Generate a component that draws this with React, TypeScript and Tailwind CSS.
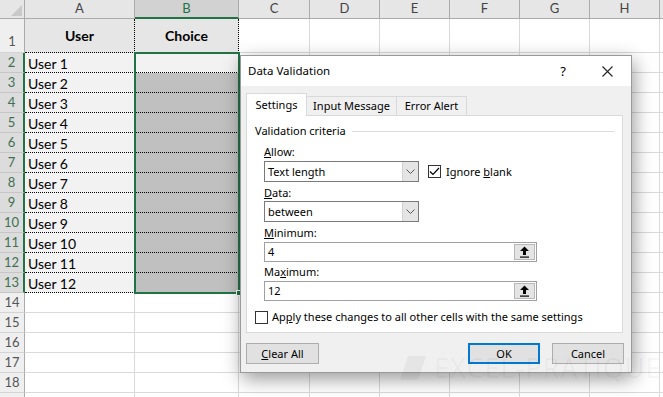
import React from 'react';

const letters = ['A', 'B', 'C', 'D', 'E', 'F', 'G', 'H', 'I'];
const rows = Array.from({ length: 19 }, (_, i) => i + 1);

function colHeaderClass(l: string) {
  if (l === 'B') {
    return 'h-[19px] flex items-center justify-center bg-[#d2d2d2] text-[#217346] border-r border-[#ababab] border-b-2 border-b-[#217346] text-[13px]';
  }
  return 'h-[19px] flex items-center justify-center bg-[#e6e6e6] text-[#444] border-r border-b border-[#ababab] text-[13px]';
}

function rowHeaderClass(r: number) {
  const h = r === 1 ? 'h-[34px] items-end pb-[1px]' : 'h-[20px] items-center';
  if (r >= 2 && r <= 13) {
    return `${h} flex justify-center bg-[#dcdcdc] text-[#3f6f52] border-b border-[#c6c6c6] border-r-2 border-r-[#217346] text-[13px]`;
  }
  return `${h} flex justify-center bg-[#efefef] text-[#555] border-b border-[#d4d4d4] border-r border-r-[#ababab] text-[13px]`;
}

function Cell({ r, c }: { r: number; c: string }) {
  const h = r === 1 ? 'h-[34px]' : 'h-[20px]';
  if (c === 'A' && r === 1) {
    return <div className={`${h} flex items-center justify-center bg-[#e7e6e6] font-bold border-b border-r border-dotted border-black`}>User</div>;
  }
  if (c === 'B' && r === 1) {
    return <div className={`${h} flex items-center justify-center bg-[#e7e6e6] font-bold border-b border-r border-dotted border-black`}>Choice</div>;
  }
  if (c === 'A' && r <= 13) {
    return <div className={`${h} flex items-center pl-[3px] pt-[1px] bg-[#f2f2f2] border-b border-r border-dotted border-black`}>User {r - 1}</div>;
  }
  if (c === 'B' && r === 2) {
    return <div className={`${h} bg-[#f2f2f2] border-b border-r border-dotted border-black`} />;
  }
  if (c === 'B' && r <= 13) {
    return <div className={`${h} bg-[#c0c0c0] border-b border-r border-dotted border-black`} />;
  }
  return <div className={`${h} bg-white border-b border-r border-[#dadada]`} />;
}

function Sheet() {
  return (
    <div className="grid grid-cols-[25px_110px_104px_71px_70px_70px_70px_70px_70px_70px] text-[14px] text-black font-['Lato',sans-serif]">
      <div className="h-[19px] bg-[#e6e6e6] border-r border-b border-[#ababab] flex items-end justify-end p-[2px]">
        <div className="w-0 h-0 border-l-[11px] border-l-transparent border-b-[11px] border-b-[#c9c9c9]" />
      </div>
      {letters.map((l) => (
        <div key={l} className={colHeaderClass(l)}>
          {l === 'I' ? '' : l}
        </div>
      ))}
      {rows.map((r) => (
        <React.Fragment key={r}>
          <div className={rowHeaderClass(r)}>{r < 19 ? r : ''}</div>
          {letters.map((c) => (
            <Cell key={c} r={r} c={c} />
          ))}
        </React.Fragment>
      ))}
    </div>
  );
}

function Chevron() {
  return (
    <svg width="9" height="5" viewBox="0 0 9 5">
      <path d="M0.5 0.5 L4.5 4.5 L8.5 0.5" fill="none" stroke="#555" strokeWidth="1" />
    </svg>
  );
}

function Select({ value }: { value: string }) {
  return (
    <div className="w-[155px] h-[21px] flex border border-[#7a7a7a] bg-white">
      <span className="flex-1 pl-[3px] flex items-center">{value}</span>
      <span className="w-[16px] bg-[#e5e5e5] border-l border-[#d0d0d0] flex items-center justify-center">
        <Chevron />
      </span>
    </div>
  );
}

function RefInput({ value }: { value: string }) {
  return (
    <div className="w-[273px] h-[20px] flex border border-[#a0a0a0] bg-white">
      <span className="flex-1 pl-[3px] flex items-center">{value}</span>
      <span className="w-[21px] my-[1px] mr-[1px] bg-[#e4e4e4] border border-[#b8b8b8] flex items-center justify-center">
        <svg width="11" height="12" viewBox="0 0 11 12">
          <path d="M5.5 0.5 L10 5 L7 5 L7 9 L4 9 L4 5 L1 5 Z" fill="#000" />
          <rect x="1" y="10.5" width="9" height="1.2" fill="#000" />
        </svg>
      </span>
    </div>
  );
}

function Check({ checked }: { checked?: boolean }) {
  return (
    <span className="w-[13px] h-[13px] border border-[#333] bg-white flex items-center justify-center">
      {checked && (
        <svg width="11" height="9" viewBox="0 0 11 9">
          <path d="M1 4.5 L4 7.5 L10 1" fill="none" stroke="#000" strokeWidth="1.2" />
        </svg>
      )}
    </span>
  );
}

function Dialog() {
  return (
    <div className="absolute left-[240px] top-[55px] w-[392px] h-[318px] border border-[#9a9a9a] bg-[#f0f0f0] shadow-[2px_6px_18px_rgba(0,0,0,0.4)] flex flex-col font-['Noto_Sans',sans-serif] text-[11px] text-black leading-[14px]">
      <div className="h-[30px] bg-white flex items-center pl-[7px]">
        <span className="text-[11.5px]">Data Validation</span>
        <span className="ml-auto mr-[36px] text-[13px]">?</span>
        <svg className="mr-[18px]" width="11" height="11" viewBox="0 0 11 11">
          <path d="M0.5 0.5 L10.5 10.5 M10.5 0.5 L0.5 10.5" stroke="#222" strokeWidth="1.1" />
        </svg>
      </div>
      <div className="pl-[5px] pt-[7px] flex flex-col">
        <div className="flex items-end h-[22px]">
          <div className="relative z-10 w-[61px] h-[23px] mb-[-1px] bg-white border border-b-0 border-[#d9d9d9] flex items-center justify-center">Settings</div>
          <div className="w-[90px] h-[19px] border border-l-0 border-b-0 border-[#d9d9d9] flex items-center justify-center">Input Message</div>
          <div className="w-[70px] h-[19px] border border-l-0 border-b-0 border-[#d9d9d9] flex items-center justify-center">Error Alert</div>
        </div>
        <div className="w-[377px] h-[218px] bg-white border border-[#d9d9d9] flex flex-col">
          <div className="mt-[8px] ml-[8px] mr-[8px] flex items-center h-[14px]">
            <span>Validation criteria</span>
            <span className="flex-1 ml-[6px] h-px bg-[#dcdcdc]" />
          </div>
          <div className="pl-[17px] flex flex-col">
            <span className="mt-[7px] h-[14px]">
              <u>A</u>llow:
            </span>
            <div className="mt-[2px] flex items-center">
              <Select value="Text length" />
              <span className="ml-[9px] flex items-center gap-[5px]">
                <Check checked />
                <span>
                  Ignore <u>b</u>lank
                </span>
              </span>
            </div>
            <span className="mt-[4px] h-[14px]">
              <u>D</u>ata:
            </span>
            <div className="mt-[1px]">
              <Select value="between" />
            </div>
            <span className="mt-[4px] h-[14px]">
              <u>M</u>inimum:
            </span>
            <div className="mt-[2px]">
              <RefInput value="4" />
            </div>
            <span className="mt-[3px] h-[14px]">
              Ma<u>x</u>imum:
            </span>
            <div className="mt-[2px]">
              <RefInput value="12" />
            </div>
          </div>
          <div className="mt-[9px] ml-[8px] flex items-center gap-[4px]">
            <Check />
            <span>
              Ap<u>p</u>ly these changes to all other cells with the same settings
            </span>
          </div>
        </div>
        <div className="mt-[10px] flex items-center">
          <button className="w-[73px] h-[21px] bg-[#e1e1e1] border border-[#adadad]">
            <u>C</u>lear All
          </button>
          <button className="ml-auto w-[72px] h-[21px] bg-[#e1e1e1] border-2 border-[#0078d7]">OK</button>
          <button className="ml-[12px] mr-[7px] w-[72px] h-[21px] bg-[#e1e1e1] border border-[#adadad]">Cancel</button>
        </div>
      </div>
    </div>
  );
}

function Watermark() {
  return (
    <div className="absolute left-[400px] top-[352px] flex items-center gap-[6px] pointer-events-none text-[rgba(0,0,0,0.045)]">
      <svg width="28" height="30" viewBox="0 0 28 30">
        <path d="M8 4 L26 4 L18 28 L0 28 Z" fill="rgba(0,0,0,0.045)" />
      </svg>
      <span className="font-['Open_Sans',sans-serif] text-[27px] leading-none tracking-[1px]">EXCEL-PRATIQUE</span>
    </div>
  );
}

export default function App() {
  return (
    <div className="relative w-[663px] h-[397px] overflow-hidden bg-white">
      <Sheet />
      {/* selection B2:B13 */}
      <div className="absolute left-[134px] top-[52px] w-[106px] h-[242px] border-2 border-[#217346] pointer-events-none" />
      <div className="absolute left-[236px] top-[290px] w-[6px] h-[6px] bg-[#217346] border border-white pointer-events-none" />
      <Dialog />
      <Watermark />
    </div>
  );
}
